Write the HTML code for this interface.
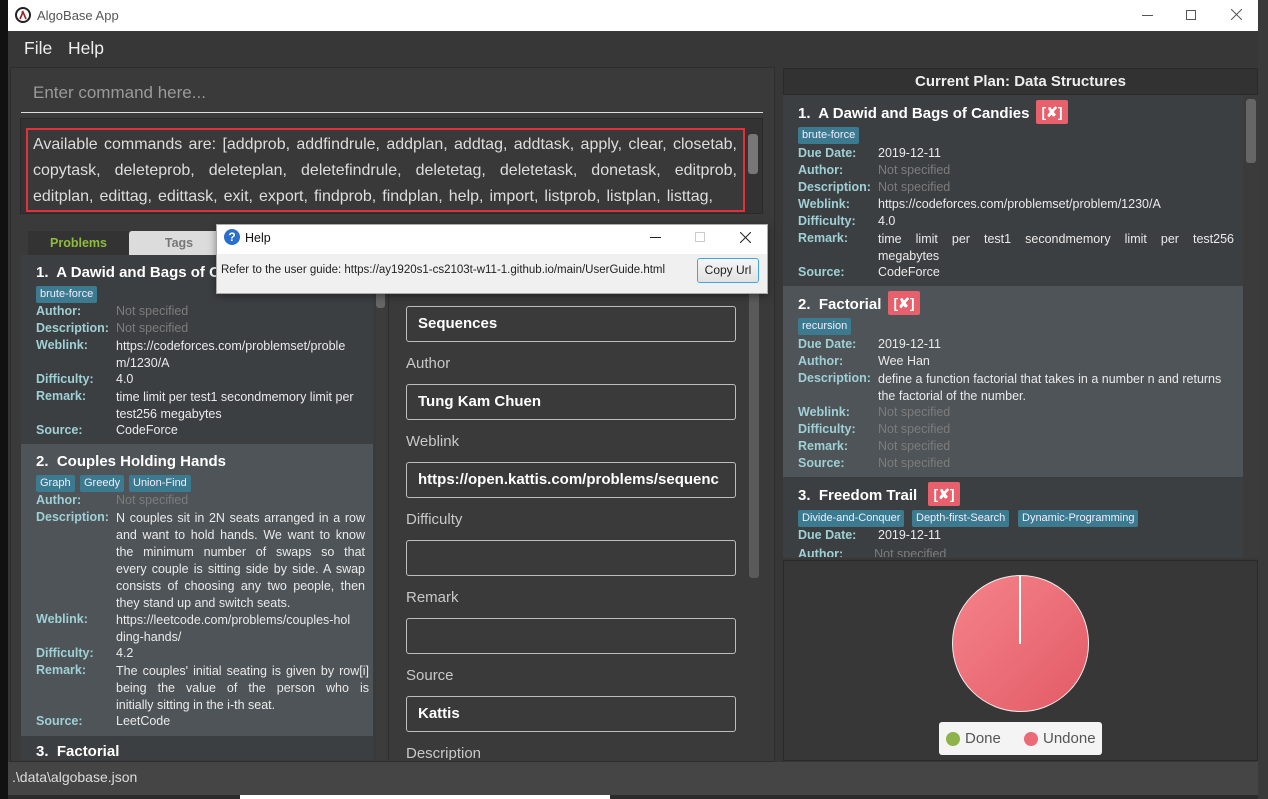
<!DOCTYPE html>
<html><head><meta charset="utf-8">
<style>
*{margin:0;padding:0;box-sizing:border-box}
body{width:1268px;height:799px;overflow:hidden;background:#2b2b2b;font-family:"Liberation Sans",sans-serif;position:relative}
.a{position:absolute;white-space:nowrap}
.lbl{color:#9fd0d6;font-weight:bold;font-size:12.5px}
.val{color:#eaeaea;font-size:12.5px}
.ns{color:#7c7c7c;font-size:12.5px}
.tag{position:absolute;background:#3c7a8f;color:#eef;font-size:11px;padding:1px 4px;border-radius:2px;height:17px;line-height:15px}
.ttl{color:#fff;font-size:15px;font-weight:bold}
.x{position:absolute;background:#e8606c;color:#fff;font-weight:bold;font-size:14px;width:32px;height:24px;text-align:center;line-height:24px;border-radius:2px}
.inp{position:absolute;left:406px;width:330px;height:36px;border:1px solid #bdbdbd;border-radius:3px;color:#fff;font-weight:bold;font-size:15px;padding-left:11px;line-height:34px;overflow:hidden;white-space:nowrap}
.fl{position:absolute;left:406px;color:#c8c8c8;font-size:15px}
.j{text-align:justify;text-align-last:justify;white-space:normal}
</style></head><body>
<div class="a" style="left:0;top:0;width:8px;height:799px;background:#111"></div>
<div class="a" style="left:1258px;top:0;width:10px;height:799px;background:#3a3a3a"></div>
<div class="a" style="left:240px;top:795px;width:370px;height:4px;background:#fff"></div>
<div class="a" style="left:8px;top:0;width:1250px;height:31px;background:#fff"></div>
<svg class="a" style="left:15px;top:7px" width="16" height="16" viewBox="0 0 16 16"><circle cx="8" cy="8" r="7" fill="none" stroke="#222" stroke-width="2"/><path d="M5 12 L8 5 L11 12 M6.5 5 H8" stroke="#922" stroke-width="1.6" fill="none"/></svg>
<div class="a" style="left:37px;top:8px;font-size:13px;color:#555">AlgoBase App</div>
<div class="a" style="left:1142px;top:15px;width:11px;height:1px;background:#555"></div>
<div class="a" style="left:1186px;top:10px;width:10px;height:10px;border:1px solid #555"></div>
<svg class="a" style="left:1231px;top:9px" width="11" height="11"><path d="M0 0L11 11M11 0L0 11" stroke="#555"/></svg>
<div class="a" style="left:8px;top:31px;width:1250px;height:764px;background:#373737"></div>
<div class="a" style="left:24px;top:38px;font-size:17.5px;color:#eee">File</div>
<div class="a" style="left:68px;top:38px;font-size:17.5px;color:#eee">Help</div>
<div class="a" style="left:10px;top:67px;width:765px;height:695px;background:#3a3a3a;border:1px solid #2d2d2d"></div>
<div class="a" style="left:33px;top:83px;font-size:17px;color:#9a9a9a">Enter command here...</div>
<div class="a" style="left:21px;top:112px;width:742px;height:1px;background:#ddd"></div>
<div class="a" style="left:20px;top:118px;width:743px;height:96px;background:#333;border:1px solid #2a2a2a"></div>
<div class="a" style="left:26px;top:128px;width:719px;height:84px;border:2px solid #e3313b;background:#393939"></div>
<div class="a" style="left:33px;top:132px;font-size:16px;color:#ddd;line-height:26px;width:704px">
<div class="j">Available commands are: [addprob, addfindrule, addplan, addtag, addtask, apply, clear, closetab,</div>
<div class="j">copytask, deleteprob, deleteplan, deletefindrule, deletetag, deletetask, donetask, editprob,</div>
<div class="j" style="width:680px">editplan, edittag, edittask, exit, export, findprob, findplan, help, import, listprob, listplan, listtag,</div></div>
<div class="a" style="left:748px;top:134px;width:10px;height:40px;background:#777;border-radius:3px"></div>
<div class="a" style="left:28px;top:231px;width:101px;height:25px;background:#333;color:#8fbc3a;font-weight:bold;font-size:12.5px;text-align:center;line-height:25px">Problems</div>
<div class="a" style="left:129px;top:231px;width:100px;height:25px;background:#dcdcdc;color:#777;font-weight:bold;font-size:12.5px;text-align:center;line-height:25px;border-radius:3px 3px 0 0">Tags</div>
<div class="a" style="left:21px;top:255px;width:352px;height:505px;background:#3c3f41;overflow:hidden"></div>
<div class="a" style="left:21px;top:444px;width:352px;height:292px;background:#4e5458"></div>
<div class="a" style="left:376px;top:255px;width:10px;height:505px;background:#3c3c3c"></div>
<div class="a" style="left:376px;top:270px;width:9px;height:38px;background:#666;border-radius:3px"></div>
<div class="a ttl" style="left:36px;top:264px">1.&nbsp; A Dawid and Bags of Candies</div>
<div class="tag" style="left:36px;top:286px">brute-force</div>
<div class="a lbl" style="left:36px;top:304px">Author:</div><div class="a ns" style="left:116px;top:304px">Not specified</div>
<div class="a lbl" style="left:36px;top:321px">Description:</div><div class="a ns" style="left:116px;top:321px">Not specified</div>
<div class="a lbl" style="left:36px;top:338px">Weblink:</div><div class="a val" style="left:116px;top:338px;line-height:17px">https://codeforces.com/problemset/proble<br>m/1230/A</div>
<div class="a lbl" style="left:36px;top:372px">Difficulty:</div><div class="a val" style="left:116px;top:372px">4.0</div>
<div class="a lbl" style="left:36px;top:389px">Remark:</div><div class="a val" style="left:116px;top:389px;line-height:17px">time limit per test1 secondmemory limit per<br>test256 megabytes</div>
<div class="a lbl" style="left:36px;top:423px">Source:</div><div class="a val" style="left:116px;top:423px">CodeForce</div>
<div class="a ttl" style="left:36px;top:453px">2.&nbsp; Couples Holding Hands</div>
<div class="tag" style="left:36px;top:475px">Graph</div>
<div class="tag" style="left:80px;top:475px">Greedy</div>
<div class="tag" style="left:129px;top:475px">Union-Find</div>
<div class="a lbl" style="left:36px;top:493px">Author:</div><div class="a ns" style="left:116px;top:493px">Not specified</div>
<div class="a lbl" style="left:36px;top:510px">Description:</div><div class="a val" style="left:116px;top:510px;line-height:17px;width:249px">
<div class="j">N couples sit in 2N seats arranged in a row</div><div class="j">and want to hold hands. We want to know</div><div class="j">the minimum number of swaps so that</div><div class="j">every couple is sitting side by side. A swap</div><div class="j">consists of choosing any two people, then</div><div>they stand up and switch seats.</div></div>
<div class="a lbl" style="left:36px;top:612px">Weblink:</div><div class="a val" style="left:116px;top:612px;line-height:17px">https://leetcode.com/problems/couples-hol<br>ding-hands/</div>
<div class="a lbl" style="left:36px;top:646px">Difficulty:</div><div class="a val" style="left:116px;top:646px">4.2</div>
<div class="a lbl" style="left:36px;top:663px">Remark:</div><div class="a val" style="left:116px;top:663px;line-height:17px;width:253px">
<div class="j">The couples' initial seating is given by row[i]</div><div class="j">being the value of the person who is</div><div>initially sitting in the i-th seat.</div></div>
<div class="a lbl" style="left:36px;top:714px">Source:</div><div class="a val" style="left:116px;top:714px">LeetCode</div>
<div class="a ttl" style="left:36px;top:743px;height:17px;overflow:hidden">3.&nbsp; Factorial</div>
<div class="a" style="left:388px;top:255px;width:1px;height:505px;background:#2e2e2e"></div>
<div class="a" style="left:749px;top:290px;width:10px;height:288px;background:#5a5a5a;border-radius:3px"></div>
<div class="inp" style="top:306px">Sequences</div>
<div class="fl" style="top:355px">Author</div>
<div class="inp" style="top:384px">Tung Kam Chuen</div>
<div class="fl" style="top:433px">Weblink</div>
<div class="inp" style="top:462px;padding-right:2px">https://open.kattis.com/problems/sequenc</div>
<div class="fl" style="top:511px">Difficulty</div>
<div class="inp" style="top:540px"></div>
<div class="fl" style="top:589px">Remark</div>
<div class="inp" style="top:618px"></div>
<div class="fl" style="top:667px">Source</div>
<div class="inp" style="top:696px">Kattis</div>
<div class="a fl" style="top:745px;height:15px;overflow:hidden">Description</div>
<div class="a" style="left:783px;top:68px;width:475px;height:27px;background:#323232;border:1px solid #2a2a2a;color:#eee;font-weight:bold;font-size:15px;text-align:center;line-height:25px">Current Plan: Data Structures</div>
<div class="a" style="left:783px;top:95px;width:460px;height:463px;background:#3c3f41"></div>
<div class="a" style="left:783px;top:286px;width:460px;height:191px;background:#4e5458"></div>
<div class="a" style="left:1243px;top:95px;width:15px;height:463px;background:#3b3b3b"></div>
<div class="a" style="left:1246px;top:99px;width:10px;height:64px;background:#666;border-radius:3px"></div>
<div class="a ttl" style="left:798px;top:105px">1.&nbsp; A Dawid and Bags of Candies</div>
<div class="x" style="left:1036px;top:100px">[✘]</div>
<div class="tag" style="left:798px;top:127px">brute-force</div>
<div class="a lbl" style="left:798px;top:146px">Due Date:</div><div class="a val" style="left:878px;top:146px">2019-12-11</div>
<div class="a lbl" style="left:798px;top:163px">Author:</div><div class="a ns" style="left:878px;top:163px">Not specified</div>
<div class="a lbl" style="left:798px;top:180px">Description:</div><div class="a ns" style="left:878px;top:180px">Not specified</div>
<div class="a lbl" style="left:798px;top:197px">Weblink:</div><div class="a val" style="left:878px;top:197px">https://codeforces.com/problemset/problem/1230/A</div>
<div class="a lbl" style="left:798px;top:214px">Difficulty:</div><div class="a val" style="left:878px;top:214px">4.0</div>
<div class="a lbl" style="left:798px;top:231px">Remark:</div><div class="a val" style="left:878px;top:231px;line-height:17px;width:356px"><div class="j">time limit per test1 secondmemory limit per test256</div><div>megabytes</div></div>
<div class="a lbl" style="left:798px;top:265px">Source:</div><div class="a val" style="left:878px;top:265px">CodeForce</div>
<div class="a ttl" style="left:798px;top:296px">2.&nbsp; Factorial</div>
<div class="x" style="left:888px;top:291px">[✘]</div>
<div class="tag" style="left:798px;top:318px">recursion</div>
<div class="a lbl" style="left:798px;top:337px">Due Date:</div><div class="a val" style="left:878px;top:337px">2019-12-11</div>
<div class="a lbl" style="left:798px;top:354px">Author:</div><div class="a val" style="left:878px;top:354px">Wee Han</div>
<div class="a lbl" style="left:798px;top:371px">Description:</div><div class="a val" style="left:878px;top:371px;line-height:17px">define a function factorial that takes in a number n and returns<br>the factorial of the number.</div>
<div class="a lbl" style="left:798px;top:405px">Weblink:</div><div class="a ns" style="left:878px;top:405px">Not specified</div>
<div class="a lbl" style="left:798px;top:422px">Difficulty:</div><div class="a ns" style="left:878px;top:422px">Not specified</div>
<div class="a lbl" style="left:798px;top:439px">Remark:</div><div class="a ns" style="left:878px;top:439px">Not specified</div>
<div class="a lbl" style="left:798px;top:456px">Source:</div><div class="a ns" style="left:878px;top:456px">Not specified</div>
<div class="a ttl" style="left:798px;top:487px">3.&nbsp; Freedom Trail</div>
<div class="x" style="left:928px;top:482px">[✘]</div>
<div class="tag" style="left:798px;top:510px">Divide-and-Conquer</div>
<div class="tag" style="left:912px;top:510px">Depth-first-Search</div>
<div class="tag" style="left:1018px;top:510px">Dynamic-Programming</div>
<div class="a lbl" style="left:798px;top:528px">Due Date:</div><div class="a val" style="left:878px;top:528px">2019-12-11</div>
<div class="a" style="left:798px;top:545px;height:12px;overflow:hidden"><span class="lbl">Author:</span><span class="ns" style="margin-left:31px">Not specified</span></div>
<div class="a" style="left:783px;top:560px;width:475px;height:201px;background:#373737;border:1px solid #2a2a2a"></div>
<div class="a" style="left:952px;top:575px;width:137px;height:137px;border-radius:50%;background:linear-gradient(135deg,#f5838a,#e25b66);border:1px solid #eee"></div>
<div class="a" style="left:1019px;top:576px;width:2px;height:68px;background:#fff"></div>
<div class="a" style="left:939px;top:722px;width:163px;height:33px;background:#f4f4f4;border-radius:3px"></div>
<div class="a" style="left:946px;top:732px;width:14px;height:14px;border-radius:50%;background:#8db34a"></div>
<div class="a" style="left:965px;top:730px;font-size:15px;color:#555">Done</div>
<div class="a" style="left:1024px;top:732px;width:14px;height:14px;border-radius:50%;background:#ec6a75"></div>
<div class="a" style="left:1043px;top:730px;font-size:15px;color:#555">Undone</div>
<div class="a" style="left:8px;top:762px;width:1250px;height:33px;background:#454545"></div>
<div class="a" style="left:12px;top:769px;font-size:14px;color:#ddd">.\data\algobase.json</div>
<div class="a" style="left:216px;top:224px;width:552px;height:70px;background:#f0f0f0;border:1px solid #aaa;box-shadow:0 2px 8px rgba(0,0,0,.4)"></div>
<div class="a" style="left:217px;top:225px;width:550px;height:29px;background:#fff"></div>
<div class="a" style="left:224px;top:229px;width:16px;height:16px;border-radius:50%;background:#2a6fd0;color:#fff;font-weight:bold;font-size:12px;text-align:center;line-height:16px">?</div>
<div class="a" style="left:245px;top:231px;font-size:12.5px;color:#111">Help</div>
<div class="a" style="left:650px;top:237px;width:11px;height:1px;background:#222"></div>
<div class="a" style="left:695px;top:232px;width:10px;height:10px;border:1px solid #ccc"></div>
<svg class="a" style="left:740px;top:232px" width="11" height="11"><path d="M0 0L11 11M11 0L0 11" stroke="#222"/></svg>
<div class="a" style="left:221px;top:264px;font-size:11.5px;color:#222">Refer to the user guide: https://ay1920s1-cs2103t-w11-1.github.io/main/UserGuide.html</div>
<div class="a" style="left:697px;top:258px;width:62px;height:25px;border:1px solid #3da7e0;border-radius:3px;background:linear-gradient(#f6f6f6,#e2e2e2);font-size:12px;color:#222;text-align:center;line-height:23px">Copy Url</div>
</body></html>
